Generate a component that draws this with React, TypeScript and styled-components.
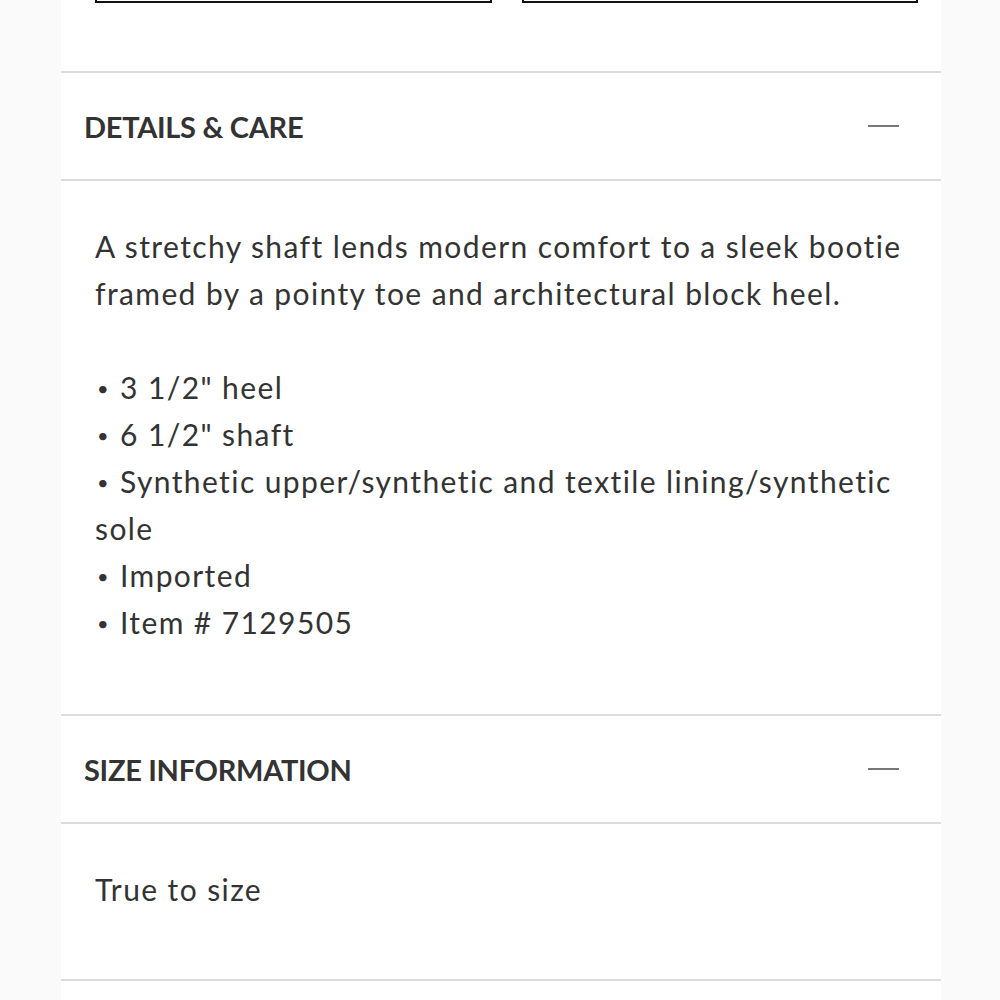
import React from "react";
import styled, { createGlobalStyle } from "styled-components";

const GlobalStyle = createGlobalStyle`
  html, body {
    margin: 0;
    padding: 0;
    background: #fafafa;
  }
  body {
    font-family: Lato, "Noto Sans", sans-serif;
    color: #333;
  }
`;

const Page = styled.div`
  width: 880px;
  margin-left: 61px;
  background: #fff;
  min-height: 1000px;
`;

const ButtonStrip = styled.div`
  height: 3px;
  overflow: hidden;
  display: flex;
  align-items: flex-end;
  gap: 30px;
  padding: 0 23px 0 34px;
`;

const GhostButton = styled.div`
  flex: 1;
  height: 50px;
  border: 2px solid #111;
  box-sizing: border-box;
  flex-shrink: 0;
`;

const Spacer = styled.div`
  height: 68px;
`;

const Divider = styled.div`
  height: 2px;
  background: #dcdcdc;
`;

const SectionHeader = styled.div`
  height: 106px;
  display: flex;
  align-items: center;
  justify-content: space-between;
  padding: 0 42px 0 23px;
`;

const SectionTitle = styled.h2`
  margin: 0;
  font-family: Lato, "Noto Sans", sans-serif;
  font-weight: 700;
  font-size: 29px;
  letter-spacing: -0.3px;
  color: #333;
`;

const Minus = styled.span`
  display: block;
  width: 31px;
  height: 2px;
  background: #777;
`;

const SectionBody = styled.div<{ $top: number; $bottom: number }>`
  padding: ${(p) => p.$top}px 18px ${(p) => p.$bottom}px 34px;
  font-size: 30px;
  letter-spacing: 1.4px;
  line-height: 47px;
  color: #333;
`;

const Para = styled.p`
  margin: 0 0 47px;
`;

const List = styled.ul`
  margin: 0;
  padding: 0;
  list-style: none;
`;

const Item = styled.li`
  &::before {
    content: "•";
    display: inline-block;
    font-size: 20px;
    line-height: 1;
    vertical-align: 3px;
    margin: 0 10px 0 2px;
  }
`;

const details = [
  '3 1/2" heel',
  '6 1/2" shaft',
  "Synthetic upper/synthetic and textile lining/synthetic sole",
  "Imported",
  "Item # 7129505",
];

export default function App() {
  return (
    <>
      <GlobalStyle />
      <Page>
        <ButtonStrip>
          <GhostButton />
          <GhostButton />
        </ButtonStrip>
        <Spacer />
        <Divider />
        <SectionHeader>
          <SectionTitle>DETAILS &amp; CARE</SectionTitle>
          <Minus />
        </SectionHeader>
        <Divider />
        <SectionBody $top={42} $bottom={68}>
          <Para>
            A stretchy shaft lends modern comfort to a sleek bootie framed by a
            pointy toe and architectural block heel.
          </Para>
          <List>
            {details.map((d) => (
              <Item key={d}>{d}</Item>
            ))}
          </List>
        </SectionBody>
        <Divider />
        <SectionHeader>
          <SectionTitle>SIZE INFORMATION</SectionTitle>
          <Minus />
        </SectionHeader>
        <Divider />
        <SectionBody $top={42} $bottom={66}>
          True to size
        </SectionBody>
        <Divider />
      </Page>
    </>
  );
}
